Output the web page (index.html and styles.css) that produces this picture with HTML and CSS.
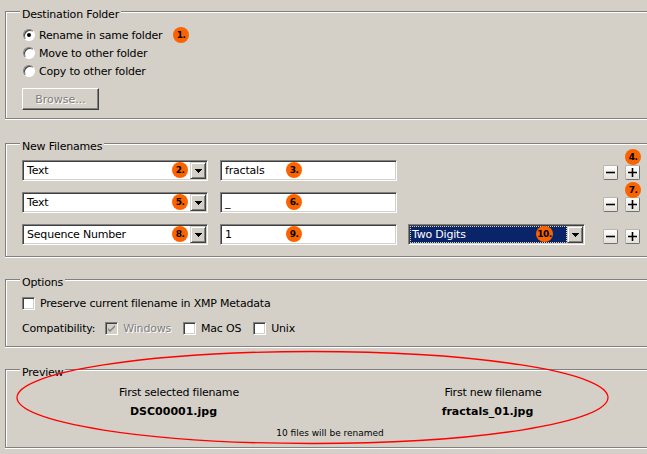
FILE: index.html
```html
<!DOCTYPE html>
<html lang="en">
<head>
<meta charset="utf-8">
<title>Batch Rename</title>
<link rel="stylesheet" href="styles.css">
</head>
<body>
<div class="dialog">
  <fieldset class="group group-dest">
    <legend>Destination Folder</legend>
    <div class="radio-row"><span class="radio checked"></span><span>Rename in same folder</span><span class="badge badge-r1">1.</span></div>
    <div class="radio-row"><span class="radio"></span><span>Move to other folder</span></div>
    <div class="radio-row"><span class="radio"></span><span>Copy to other folder</span></div>
    <button class="btn" type="button" disabled><span class="disabled-text">Browse...</span></button>
  </fieldset>

  <fieldset class="group group-names">
    <legend>New Filenames</legend>
    <div class="name-rows">
      <div class="name-row">
        <div class="combo combo-main"><span class="combo-value">Text</span><span class="badge badge-combo">2.</span><span class="drop"><svg width="7" height="4" viewBox="0 0 7 4"><path d="M0 0h7v1h-1v1h-1v1h-1v1h-1v-1h-1v-1h-1v-1h-1z"/></svg></span></div>
        <div class="field"><span>fractals</span><span class="badge badge-field">3.</span></div>
        <span></span>
        <span class="mini-btn"><svg width="13" height="13" viewBox="0 0 13 13"><path d="M2 6.5h9"/></svg></span>
        <span class="mini-btn"><svg width="13" height="13" viewBox="0 0 13 13"><path d="M2 6.5h9M6.5 2v9"/></svg><span class="badge badge-above">4.</span></span>
      </div>
      <div class="name-row">
        <div class="combo combo-main"><span class="combo-value">Text</span><span class="badge badge-combo">5.</span><span class="drop"><svg width="7" height="4" viewBox="0 0 7 4"><path d="M0 0h7v1h-1v1h-1v1h-1v1h-1v-1h-1v-1h-1v-1h-1z"/></svg></span></div>
        <div class="field"><span>_</span><span class="badge badge-field">6.</span></div>
        <span></span>
        <span class="mini-btn"><svg width="13" height="13" viewBox="0 0 13 13"><path d="M2 6.5h9"/></svg></span>
        <span class="mini-btn"><svg width="13" height="13" viewBox="0 0 13 13"><path d="M2 6.5h9M6.5 2v9"/></svg><span class="badge badge-above badge-above-2">7.</span></span>
      </div>
      <div class="name-row">
        <div class="combo combo-main"><span class="combo-value">Sequence Number</span><span class="badge badge-combo">8.</span><span class="drop"><svg width="7" height="4" viewBox="0 0 7 4"><path d="M0 0h7v1h-1v1h-1v1h-1v1h-1v-1h-1v-1h-1v-1h-1z"/></svg></span></div>
        <div class="field"><span>1</span><span class="badge badge-field">9.</span></div>
        <div class="combo combo-digits"><span class="combo-value selected">Two Digits</span><span class="badge badge-digits">10.</span><span class="drop"><svg width="7" height="4" viewBox="0 0 7 4"><path d="M0 0h7v1h-1v1h-1v1h-1v1h-1v-1h-1v-1h-1v-1h-1z"/></svg></span></div>
        <span class="mini-btn"><svg width="13" height="13" viewBox="0 0 13 13"><path d="M2 6.5h9"/></svg></span>
        <span class="mini-btn"><svg width="13" height="13" viewBox="0 0 13 13"><path d="M2 6.5h9M6.5 2v9"/></svg></span>
      </div>
    </div>
  </fieldset>

  <fieldset class="group group-options">
    <legend>Options</legend>
    <div class="check-row"><span class="checkbox"></span><span>Preserve current filename in XMP Metadata</span></div>
    <div class="check-row compat-row">
      <span class="compat-label">Compatibility:</span>
      <span class="checkbox disabled"><svg width="9" height="9" viewBox="0 0 9 9"><path d="M1 4l2 2 5-5v2l-5 5-2-2z"/></svg></span><span class="disabled-text compat-text">Windows</span>
      <span class="checkbox"></span><span class="compat-text">Mac OS</span>
      <span class="checkbox"></span><span class="compat-text">Unix</span>
    </div>
  </fieldset>

  <fieldset class="group group-preview">
    <legend>Preview</legend>
    <div class="preview-cols">
      <div class="preview-col">
        <div class="preview-label">First selected filename</div>
        <div class="preview-name">DSC00001.jpg</div>
      </div>
      <div class="preview-col preview-col-right">
        <div class="preview-label">First new filename</div>
        <div class="preview-name">fractals_01.jpg</div>
      </div>
    </div>
    <div class="preview-count">10 files will be renamed</div>
  </fieldset>
</div>
<svg class="highlight" width="647" height="454" viewBox="0 0 647 454"><ellipse cx="312.5" cy="397.5" rx="295.5" ry="46"/></svg>
</body>
</html>
```

FILE: styles.css
```css
html, body {
  margin: 0;
  height: 100%;
  overflow: hidden;
  background: #d4d0c8;
}

body {
  position: relative;
  font-family: "DejaVu Sans", "Noto Sans", sans-serif;
  font-size: 11px;
  letter-spacing: -0.2px;
  color: #000;
}

.dialog {
  display: flex;
  flex-direction: column;
  gap: 13px;
  padding: 2px 0 0 5px;
}

/* group boxes continue past the right edge of the window, so no right border is visible */
.group {
  margin: 0;
  padding: 0 0 0 16px;
  min-width: 0;
  border: 1px solid #808080;
  border-right: 0;
  box-shadow: inset 1px 1px 0 #fff, 0 1px 0 #fff;
}

.group legend {
  padding: 6px 2px 0;
  margin-left: -2px;
  line-height: 13px;
  background: #d4d0c8;
}

/* Destination folder */
.group-dest {
  padding-top: 5px;
  padding-bottom: 8px;
  margin-bottom: 2px;
}

.radio-row {
  position: relative;
  display: flex;
  align-items: center;
  height: 18px;
}

.radio {
  box-sizing: border-box;
  width: 12px;
  height: 12px;
  margin: 0 4px 0 1px;
  border-radius: 50%;
  border: 1px solid;
  border-color: #808080 #ffffff #ffffff #808080;
  background: #fff;
  box-shadow: inset 1px 1px 0 #404040;
  display: flex;
  align-items: center;
  justify-content: center;
}

.radio.checked::after {
  content: "";
  width: 4px;
  height: 4px;
  border-radius: 50%;
  background: #000;
}

.btn {
  display: block;
  box-sizing: border-box;
  width: 77px;
  height: 22px;
  margin-top: 8px;
  padding: 0;
  font: inherit;
  background: #d4d0c8;
  border: 1px solid;
  border-color: #ffffff #404040 #404040 #ffffff;
  box-shadow: inset -1px -1px 0 #808080;
}

.disabled-text {
  color: #808080;
  text-shadow: 1px 1px 0 #fff;
}

/* Badges (annotation markers laid over the controls) */
.badge {
  position: absolute;
  width: 16px;
  height: 16px;
  border-radius: 50%;
  background: #fa6400;
  color: #000;
  font-family: "DejaVu Sans", sans-serif;
  font-weight: bold;
  font-size: 9px;
  letter-spacing: -0.5px;
  display: flex;
  align-items: center;
  justify-content: center;
  text-shadow: none;
}

.badge-r1 {
  left: 151px;
  top: 1px;
}

.badge-combo {
  right: 19px;
  top: 1px;
}

.badge-digits {
  right: 31px;
  top: 1px;
  width: 17px;
}

.badge-field {
  left: 65px;
  top: 1px;
}

.badge-above {
  left: -1px;
  bottom: calc(100% + 1px);
}

.badge-above-2 {
  bottom: 100%;
}

/* New filenames */
.group-names {
  padding-top: 7px;
  padding-bottom: 11px;
}

.name-rows {
  display: flex;
  flex-direction: column;
  gap: 11px;
}

.name-row {
  display: grid;
  grid-template-columns: 198px 188px 195px 22px 15px;
  align-items: center;
  height: 21px;
}

.combo,
.field {
  position: relative;
  box-sizing: border-box;
  height: 21px;
  border: 1px solid;
  border-color: #808080 #ffffff #ffffff #808080;
  box-shadow: inset 1px 1px 0 #404040, inset -1px -1px 0 #d4d0c8;
  background: #fff;
  display: flex;
  align-items: center;
}

.combo-main {
  width: 186px;
}

.combo-digits {
  width: 177px;
}

.field {
  width: 177px;
  padding-left: 4px;
}

.combo-value {
  flex: 1;
  align-self: stretch;
  display: flex;
  align-items: center;
  padding-left: 3px;
  margin: 1px 0 1px 1px;
}

.combo-value.selected {
  background: #0a246a;
  color: #fff;
  outline: 1px dotted #d8d4a0;
  outline-offset: -1px;
  padding-left: 2px;
}

.drop {
  box-sizing: border-box;
  width: 16px;
  height: 17px;
  margin-right: 1px;
  background: #d4d0c8;
  border: 1px solid;
  border-color: #d4d0c8 #404040 #404040 #d4d0c8;
  box-shadow: inset 1px 1px 0 #fff, inset -1px -1px 0 #808080;
  display: flex;
  align-items: center;
  justify-content: center;
}

.drop svg {
  display: block;
  fill: #000;
  shape-rendering: crispEdges;
}

.mini-btn {
  position: relative;
  box-sizing: border-box;
  width: 15px;
  height: 15px;
  margin-top: 3px;
  border: 1px solid;
  border-color: #b8b5ae #707070 #707070 #b8b5ae;
  border-radius: 2px;
  background: linear-gradient(#ffffff, #e4e1da);
  display: flex;
  align-items: center;
  justify-content: center;
}

.mini-btn svg {
  display: block;
  stroke: #000;
  stroke-width: 1.6;
  fill: none;
}

/* Options */
.group-options {
  padding-top: 5px;
  padding-bottom: 9px;
}

.check-row {
  display: flex;
  align-items: center;
  height: 18px;
}

.compat-row {
  margin-top: 7px;
}

.checkbox {
  box-sizing: border-box;
  width: 13px;
  height: 13px;
  margin-right: 5px;
  border: 1px solid;
  border-color: #808080 #ffffff #ffffff #808080;
  box-shadow: inset 1px 1px 0 #404040, inset -1px -1px 0 #d4d0c8;
  background: #fff;
  display: flex;
  align-items: center;
  justify-content: center;
}

.checkbox.disabled {
  background: #d4d0c8;
}

.checkbox svg {
  display: block;
  fill: #808080;
}

.compat-label {
  margin-right: 10px;
}

.compat-text {
  margin-right: 12px;
}

/* Preview */
.group-preview {
  padding-top: 7px;
  padding-bottom: 8px;
}

.preview-cols {
  display: grid;
  grid-template-columns: 314px 1fr;
}

.preview-col {
  text-align: center;
}

.preview-col-right {
  padding-left: 3px;
}

.preview-label {
  line-height: 14px;
}

.preview-name {
  margin-top: 5px;
  padding-right: 11px;
  line-height: 14px;
  font-weight: bold;
  letter-spacing: 0;
}

.preview-count {
  width: 616px;
  margin-top: 8px;
  line-height: 12px;
  font-size: 9px;
  letter-spacing: 0;
  text-align: center;
}

.highlight {
  position: absolute;
  left: 0;
  top: 0;
  pointer-events: none;
}

.highlight ellipse {
  fill: none;
  stroke: #ff0000;
  stroke-width: 1.3;
}
```
